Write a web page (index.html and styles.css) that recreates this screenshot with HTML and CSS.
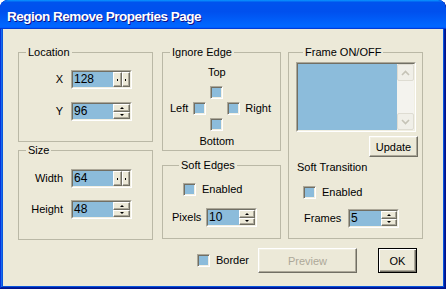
FILE: index.html
```html
<!DOCTYPE html>
<html lang="en">
<head>
  <meta charset="UTF-8" />
  <title>Region Remove Properties Page</title>
  <link rel="stylesheet" href="styles.css">
</head>
<body>

  <div class="window">
    <div class="titlebar">
      <span class="title">Region Remove Properties Page</span>
    </div>

    <div class="client">
      <div class="columns">

        <!-- Left column -->
        <div class="col col-left">
          <fieldset class="group location">
            <legend>Location</legend>
            <div class="field-row">
              <span class="field-label">X</span>
              <div class="spin spin-h">
                <div class="spin-inner">
                  <span class="spin-value">128</span>
                  <span class="spin-buttons">
                    <span class="spin-btn"><span class="dot"></span></span>
                    <span class="spin-btn"><span class="dot"></span></span>
                  </span>
                </div>
              </div>
            </div>
            <div class="field-row">
              <span class="field-label">Y</span>
              <div class="spin spin-v">
                <div class="spin-inner">
                  <span class="spin-value">96</span>
                  <span class="spin-buttons">
                    <span class="spin-btn"><span class="arrow-up"></span></span>
                    <span class="spin-btn"><span class="arrow-down"></span></span>
                  </span>
                </div>
              </div>
            </div>
          </fieldset>

          <fieldset class="group size">
            <legend>Size</legend>
            <div class="field-row">
              <span class="field-label">Width</span>
              <div class="spin spin-h">
                <div class="spin-inner">
                  <span class="spin-value">64</span>
                  <span class="spin-buttons">
                    <span class="spin-btn"><span class="dot"></span></span>
                    <span class="spin-btn"><span class="dot"></span></span>
                  </span>
                </div>
              </div>
            </div>
            <div class="field-row">
              <span class="field-label">Height</span>
              <div class="spin spin-v">
                <div class="spin-inner">
                  <span class="spin-value">48</span>
                  <span class="spin-buttons">
                    <span class="spin-btn"><span class="arrow-up"></span></span>
                    <span class="spin-btn"><span class="arrow-down"></span></span>
                  </span>
                </div>
              </div>
            </div>
          </fieldset>
        </div>

        <!-- Middle column -->
        <div class="col col-mid">
          <fieldset class="group edges">
            <legend>Ignore Edge</legend>
            <div class="cross">
              <span class="cross-top">Top</span>
              <span class="check cross-top-check"></span>
              <span class="cross-left">Left</span>
              <span class="check cross-left-check"></span>
              <span class="check cross-right-check"></span>
              <span class="cross-right">Right</span>
              <span class="check cross-bottom-check"></span>
              <span class="cross-bottom">Bottom</span>
            </div>
          </fieldset>

          <fieldset class="group soft">
            <legend>Soft Edges</legend>
            <div class="check-row">
              <span class="check"></span>
              <span>Enabled</span>
            </div>
            <div class="field-row pixels-row">
              <span class="small-label">Pixels</span>
              <div class="spin spin-v spin-small">
                <div class="spin-inner">
                  <span class="spin-value">10</span>
                  <span class="spin-buttons">
                    <span class="spin-btn"><span class="arrow-up"></span></span>
                    <span class="spin-btn"><span class="arrow-down"></span></span>
                  </span>
                </div>
              </div>
            </div>
          </fieldset>
        </div>

        <!-- Right column -->
        <fieldset class="group frame">
          <legend>Frame ON/OFF</legend>
          <div class="listbox">
            <div class="listbox-inner">
              <div class="list-area"></div>
              <div class="scrollbar">
                <span class="scroll-btn">
                  <svg width="9" height="6" viewBox="0 0 9 6"><path d="M1 5 L4.5 1.5 L8 5" fill="none" stroke="#c5c3b6" stroke-width="1.6"/></svg>
                </span>
                <span class="scroll-btn scroll-btn-down">
                  <svg width="9" height="6" viewBox="0 0 9 6"><path d="M1 1 L4.5 4.5 L8 1" fill="none" stroke="#c5c3b6" stroke-width="1.6"/></svg>
                </span>
              </div>
            </div>
          </div>
          <button class="btn update-btn">Update</button>

          <div class="sub-title">Soft Transition</div>
          <div class="check-row transition-check">
            <span class="check"></span>
            <span>Enabled</span>
          </div>
          <div class="field-row frames-row">
            <span class="frames-label">Frames</span>
            <div class="spin spin-v spin-small">
              <div class="spin-inner">
                <span class="spin-value">5</span>
                <span class="spin-buttons">
                  <span class="spin-btn"><span class="arrow-up"></span></span>
                  <span class="spin-btn"><span class="arrow-down"></span></span>
                </span>
              </div>
            </div>
          </div>
        </fieldset>
      </div>

      <!-- Dialog buttons -->
      <div class="footer">
        <div class="check-row">
          <span class="check"></span>
          <span>Border</span>
        </div>
        <button class="btn preview-btn" disabled>Preview</button>
        <button class="btn btn-default ok-btn">OK</button>
      </div>
    </div>
  </div>

</body>
</html>
```

FILE: styles.css
```css
* {
  box-sizing: border-box;
  margin: 0;
  padding: 0;
}

body {
  font-family: "Liberation Sans", Arial, sans-serif;
  font-size: 11px;
  line-height: 13px;
  color: #000;
  background-color: #ffffff;
}

/* Window frame */
.window {
  width: 446px;
  height: 289px;
  display: flex;
  flex-direction: column;
  background-color: #0855dd;
  border-radius: 8px 8px 0 0;
  overflow: hidden;
  box-shadow: inset -1px -1px #00138c, inset 1px 1px #0831d9, inset -2px -2px #001ea0, inset 2px 2px #166aee;
}

.titlebar {
  height: 29px;
  flex: none;
  display: flex;
  align-items: center;
  padding: 3px 0 0 7px;
  border-radius: 8px 8px 0 0;
  background: linear-gradient(180deg, #0997ff, #0053ee 8%, #0050ee 40%, #0066ff 88%, #0066ff 93%, #005bff 95%, #003dd7 96%, #003dd7);
}

.title {
  color: #ffffff;
  font-weight: bold;
  font-size: 13.5px;
  letter-spacing: -0.5px;
  text-shadow: 1px 1px #0f1089;
}

.client {
  flex: 1;
  margin: 0 3px 3px;
  background-color: #ece9d8;
  padding: 17px 0 0 15px;
}

.columns {
  display: flex;
  align-items: flex-start;
}

.col {
  display: flex;
  flex-direction: column;
}

.col-left {
  width: 135px;
  gap: 2px;
}

.col-mid {
  width: 119px;
  margin-left: 9px;
  gap: 8px;
}

/* Group boxes */
.group {
  border: 1px solid #bab8a6;
  min-width: 0;
}

.group legend {
  margin-left: 7px;
  padding: 0 2px;
}

.location {
  height: 96px;
  padding-top: 11px;
}

.size {
  height: 96px;
  padding-top: 12px;
}

.field-row {
  display: flex;
  align-items: center;
  height: 19px;
}

.field-label {
  width: 44px;
  margin-right: 8px;
  text-align: right;
}

.location .field-row + .field-row {
  margin-top: 13px;
}

.size .field-row + .field-row {
  margin-top: 12px;
}

/* Spin edit */
.spin {
  width: 61px;
  height: 19px;
  border: 1px solid;
  border-color: #aca899 #ffffff #ffffff #aca899;
}

.spin-small {
  width: 51px;
}

.spin-inner {
  display: flex;
  height: 100%;
  border: 1px solid;
  border-color: #716f64 #f1efe2 #f1efe2 #716f64;
  background-color: #8cbcdb;
}

.spin-value {
  flex: 1;
  padding-left: 1px;
  line-height: 15px;
  font-size: 12px;
}

.spin-buttons {
  width: 17px;
  display: flex;
}

.spin-small .spin-buttons {
  width: 16px;
}

.spin-v .spin-buttons {
  flex-direction: column;
}

.spin-btn {
  flex: 1;
  display: flex;
  align-items: center;
  justify-content: center;
  background-color: #ece9d8;
  border: 1px solid;
  border-color: #ffffff #716f64 #716f64 #ffffff;
  box-shadow: inset -1px -1px #aca899;
}

.dot {
  width: 1px;
  height: 2px;
  background-color: #000;
}

.arrow-up {
  width: 0;
  height: 0;
  border-left: 2px solid transparent;
  border-right: 2px solid transparent;
  border-bottom: 2px solid #000;
}

.arrow-down {
  width: 0;
  height: 0;
  border-left: 2px solid transparent;
  border-right: 2px solid transparent;
  border-top: 2px solid #000;
}

/* Checkbox */
.check {
  width: 13px;
  height: 13px;
  flex: none;
  border: 1px solid;
  border-color: #aca899 #ffffff #ffffff #aca899;
  box-shadow: inset 1px 1px #716f64, inset -1px -1px #f1efe2;
  background-color: #8cbcdb;
}

.check-row {
  display: flex;
  align-items: center;
  gap: 6px;
}

/* Ignore edge cross */
.edges {
  height: 105px;
  padding: 7px 9px 0 0;
}

.cross {
  display: grid;
  grid-template-columns: 1fr 13px 21px 13px 1fr;
  row-gap: 3px;
}

.cross-top {
  grid-column: 2 / 5;
  grid-row: 1;
  justify-self: center;
  margin-bottom: 4px;
}

.cross-top-check {
  grid-column: 3;
  grid-row: 2;
  justify-self: center;
}

.cross-left {
  grid-column: 1;
  grid-row: 3;
  justify-self: end;
  margin-right: 5px;
}

.cross-left-check {
  grid-column: 2;
  grid-row: 3;
}

.cross-right-check {
  grid-column: 4;
  grid-row: 3;
}

.cross-right {
  grid-column: 5;
  grid-row: 3;
  margin-left: 5px;
}

.cross-bottom-check {
  grid-column: 3;
  grid-row: 4;
  justify-self: center;
}

.cross-bottom {
  grid-column: 2 / 5;
  grid-row: 5;
  justify-self: center;
  margin-top: 1px;
}

/* Soft edges */
.soft {
  height: 80px;
  padding: 11px 0 0 9px;
}

.soft .check-row {
  margin-left: 11px;
}

.pixels-row {
  margin-top: 12px;
}

.small-label {
  width: 34px;
}

/* Frame on/off */
.frame {
  width: 135px;
  height: 193px;
  margin-left: 7px;
  padding: 3px 0 0 7px;
}

.listbox {
  width: 120px;
  height: 70px;
  border: 1px solid;
  border-color: #aca899 #ffffff #ffffff #aca899;
}

.listbox-inner {
  display: flex;
  height: 100%;
  border: 1px solid;
  border-color: #716f64 #f1efe2 #f1efe2 #716f64;
}

.list-area {
  flex: 1;
  background-color: #8cbcdb;
}

.scrollbar {
  width: 17px;
  display: flex;
  flex-direction: column;
  background-color: #f4f3ee;
}

.scroll-btn {
  width: 17px;
  height: 17px;
  display: flex;
  align-items: center;
  justify-content: center;
  background-color: #f0efe8;
  border: 1px solid #dedcd2;
  border-radius: 2px;
}

.scroll-btn-down {
  margin-top: auto;
}

/* Buttons */
.btn {
  display: block;
  font-family: inherit;
  font-size: 11px;
  color: #000;
  background-color: #ece9d8;
  border: 1px solid;
  border-color: #ffffff #716f64 #716f64 #ffffff;
  box-shadow: inset -1px -1px #aca899, inset 1px 1px #f1efe2;
}

.update-btn {
  width: 49px;
  height: 21px;
  margin: 4px 4px 0 auto;
}

.sub-title {
  margin-top: 4px;
  padding-left: 1px;
}

.transition-check {
  margin: 12px 0 0 7px;
}

.frames-row {
  margin: 10px 0 0 8px;
}

.frames-label {
  width: 44px;
}

/* Footer */
.footer {
  display: flex;
  align-items: center;
  justify-content: flex-end;
  height: 25px;
  margin: 8px 26px 0 0;
}

.preview-btn {
  width: 99px;
  height: 25px;
  margin-left: 9px;
  color: #aca899;
}

.btn-default {
  border: 1px solid #000;
  box-shadow: inset 1px 1px #ffffff, inset -1px -1px #716f64, inset -2px -2px #aca899;
}

.ok-btn {
  width: 39px;
  height: 25px;
  margin-left: 21px;
}
```
